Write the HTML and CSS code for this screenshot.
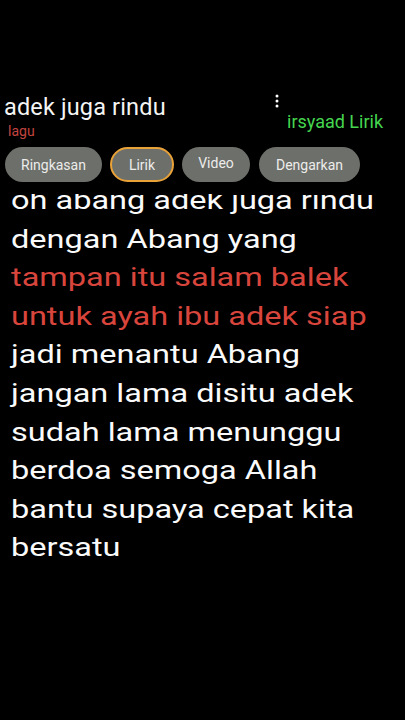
FILE: index.html
```html
<!DOCTYPE html>
<html>
<head>
<meta charset="utf-8">
<link rel="stylesheet" href="styles.css">
</head>
<body>
<div class="screen">
  <header class="header">
    <div class="title-block">
      <div class="title">adek juga rindu</div>
      <div class="subtitle">lagu</div>
    </div>
    <div class="side">
      <svg class="dots" width="4" height="14" viewBox="0 0 4 14"><circle cx="2" cy="2" r="1.5" fill="#fff"/><circle cx="2" cy="7" r="1.5" fill="#fff"/><circle cx="2" cy="12" r="1.5" fill="#fff"/></svg>
      <div class="channel">irsyaad Lirik</div>
    </div>
  </header>
  <nav class="chips">
    <span class="chip chip-ringkasan">Ringkasan</span>
    <span class="chip chip-lirik active">Lirik</span>
    <span class="chip chip-video">Video</span>
    <span class="chip chip-dengarkan">Dengarkan</span>
  </nav>
  <div class="lyrics">
    <div class="lyrics-inner">
      <div class="line">oh abang adek juga rindu</div>
      <div class="line">dengan Abang yang</div>
      <div class="line red">tampan itu salam balek</div>
      <div class="line red">untuk ayah ibu adek siap</div>
      <div class="line">jadi menantu Abang</div>
      <div class="line">jangan lama disitu adek</div>
      <div class="line">sudah lama menunggu</div>
      <div class="line">berdoa semoga Allah</div>
      <div class="line">bantu supaya cepat kita</div>
      <div class="line">bersatu</div>
    </div>
  </div>
</div>
</body>
</html>
```
FILE: styles.css
```css
html, body {
  margin: 0;
  padding: 0;
  background: #000;
}
body {
  width: 405px;
  height: 720px;
  overflow: hidden;
  font-family: Roboto, "Noto Sans", sans-serif;
  color: #fff;
}
.screen {
  display: flex;
  flex-direction: column;
}
.header {
  display: grid;
  grid-template-columns: 1fr 131px;
  padding-top: 93px;
  height: 53px;
}
.title-block {
  padding-left: 4px;
}
.title {
  font-size: 23.5px;
  line-height: 28px;
  letter-spacing: 0.15px;
  color: #f4f4f4;
}
.subtitle {
  font-size: 14px;
  line-height: 18px;
  color: #c4453f;
  padding-left: 4px;
  margin-top: 1px;
}
.side {
  display: flex;
  flex-direction: column;
  padding-left: 1px;
}
.dots {
  display: block;
  margin-top: 1px;
}
.channel {
  font-size: 18px;
  line-height: 21px;
  color: #45d54f;
  padding-left: 12px;
  margin-top: 3px;
}
.chips {
  display: flex;
  gap: 8px;
  padding-left: 5px;
  margin-top: 1px;
  height: 35px;
  position: relative;
  z-index: 2;
}
.chip {
  box-sizing: border-box;
  height: 35px;
  border-radius: 18px;
  background: #6d6f6a;
  color: #ececea;
  font-size: 14px;
  display: flex;
  align-items: center;
  justify-content: center;
}
.chip-ringkasan { width: 97px; }
.chip-lirik { width: 64px; }
.chip-video { width: 68px; padding-bottom: 4px; }
.chip-dengarkan { width: 101px; margin-left: 1px; }
.chip.active {
  border: 2px solid #e9a238;
}
.lyrics {
  height: 380px;
  overflow: hidden;
  margin-top: 12px;
}
.lyrics-inner {
  margin-top: -13px;
  padding-left: 11px;
}
.line {
  font-size: 26px;
  line-height: 38.6px;
  color: #fafafa;
  white-space: nowrap;
  transform: scaleX(1.25);
  transform-origin: left center;
}
.line.red {
  color: #d8453c;
}
```
